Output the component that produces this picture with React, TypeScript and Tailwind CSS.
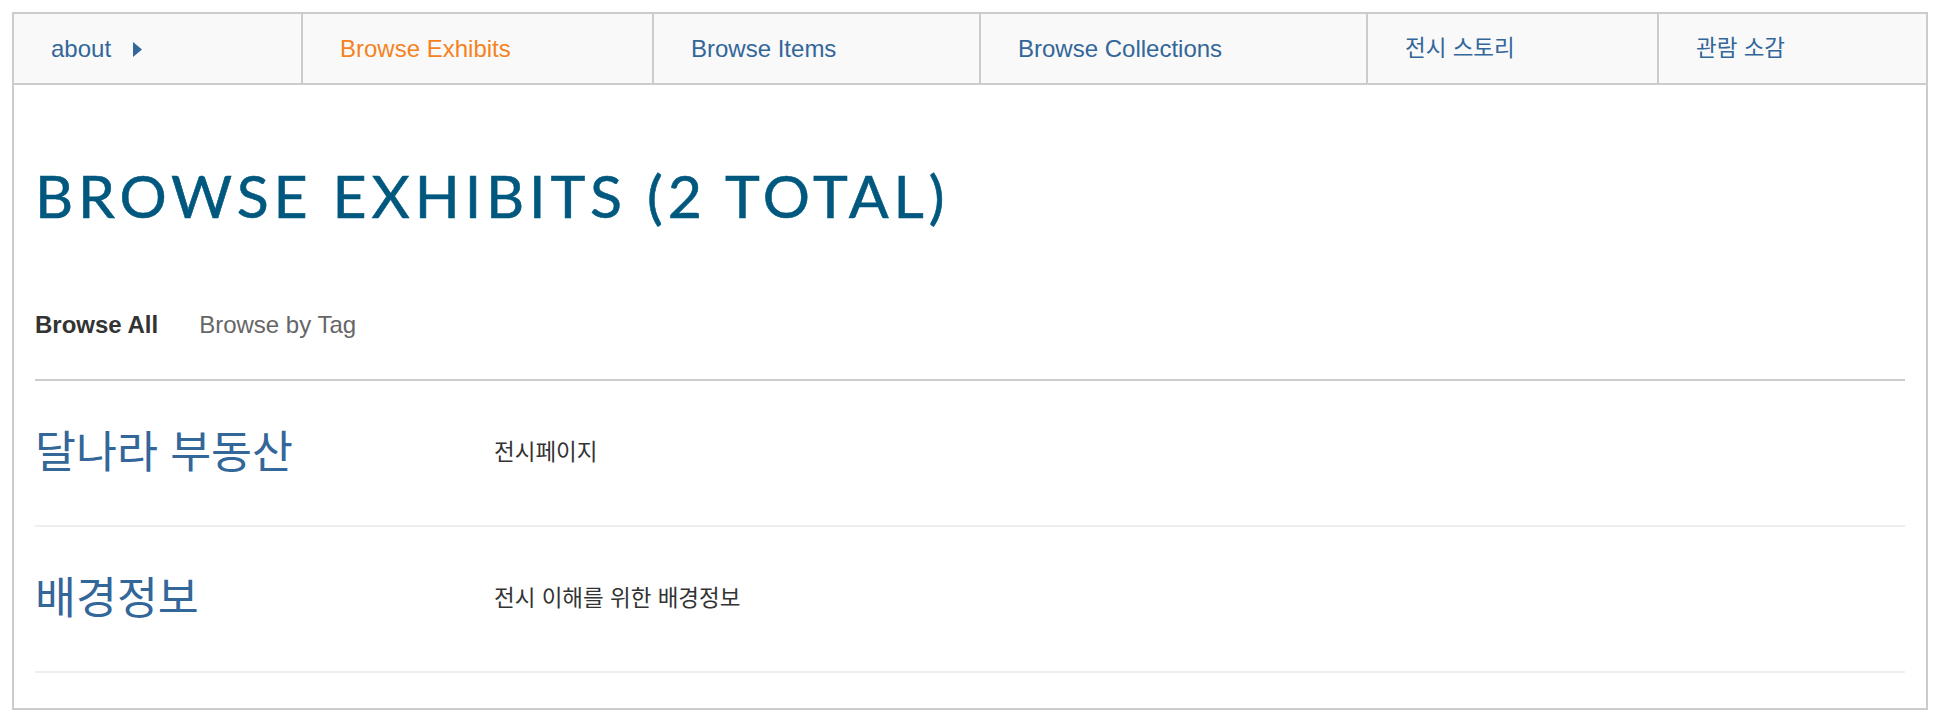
const navItems = [
  { label: "about", width: "w-[289px]", arrow: true },
  { label: "Browse Exhibits", width: "w-[351px]", active: true },
  { label: "Browse Items", width: "w-[327px]" },
  { label: "Browse Collections", width: "w-[387px]" },
  { label: "전시 스토리", width: "w-[291px]", ko: true },
  { label: "관람 소감", width: "flex-1", last: true, ko: true },
];

const exhibits = [
  { title: "달나라 부동산", description: "전시페이지" },
  { title: "배경정보", description: "전시 이해를 위한 배경정보" },
];

function NavBar() {
  return (
    <nav className="flex h-[71px] border-b-2 border-[#cccccc] bg-[#f9f9f9]">
      {navItems.map((item) => (
        <a
          key={item.label}
          href="#"
          className={`flex items-center pl-[37px] ${item.ko ? "text-[22.5px]" : "text-[24px]"} ${item.width} ${
            item.last ? "" : "border-r-2 border-[#cccccc]"
          } ${item.active ? "text-[#f5821f]" : "text-[#336699]"}`}
        >
          {item.label}
          {item.arrow && (
            <svg className="ml-[22px] mt-[1px]" width="9" height="15" viewBox="0 0 9 15">
              <path d="M0 0 L9 7.5 L0 15 Z" fill="#336699" />
            </svg>
          )}
        </a>
      ))}
    </nav>
  );
}

export default function App() {
  return (
    <div
      className="bg-white px-3 pt-3 pb-5 text-[#333333]"
      style={{ fontFamily: '"Liberation Sans", "Noto Sans CJK KR", sans-serif' }}
    >
      <div className="border-2 border-[#cccccc]">
        <NavBar />
        <main className="px-[21px] pb-[35px]">
          <h1
            className="mt-[75px] text-[59px] leading-[72px] uppercase tracking-[0.083em] text-[#00587f]"
            style={{ fontFamily: 'Lato, "Noto Sans CJK KR", sans-serif', WebkitTextStroke: "0.6px #00587f" }}
          >
            Browse Exhibits (2 total)
          </h1>
          <ul className="mt-[75px] flex gap-[41px] text-[24px] leading-[36px]">
            <li className="font-bold text-[#333333]">Browse All</li>
            <li className="text-[#666666]">Browse by Tag</li>
          </ul>
          <div className="mt-[36px] border-t-2 border-[#cccccc]">
            {exhibits.map((ex) => (
              <div
                key={ex.title}
                className="flex h-[146px] items-center border-b-2 border-[#eeeeee]"
              >
                <h2 className="w-[459px] text-[44.5px] font-normal text-[#336699]">{ex.title}</h2>
                <p className="text-[22.5px] text-[#333333]">{ex.description}</p>
              </div>
            ))}
          </div>
        </main>
      </div>
    </div>
  );
}
